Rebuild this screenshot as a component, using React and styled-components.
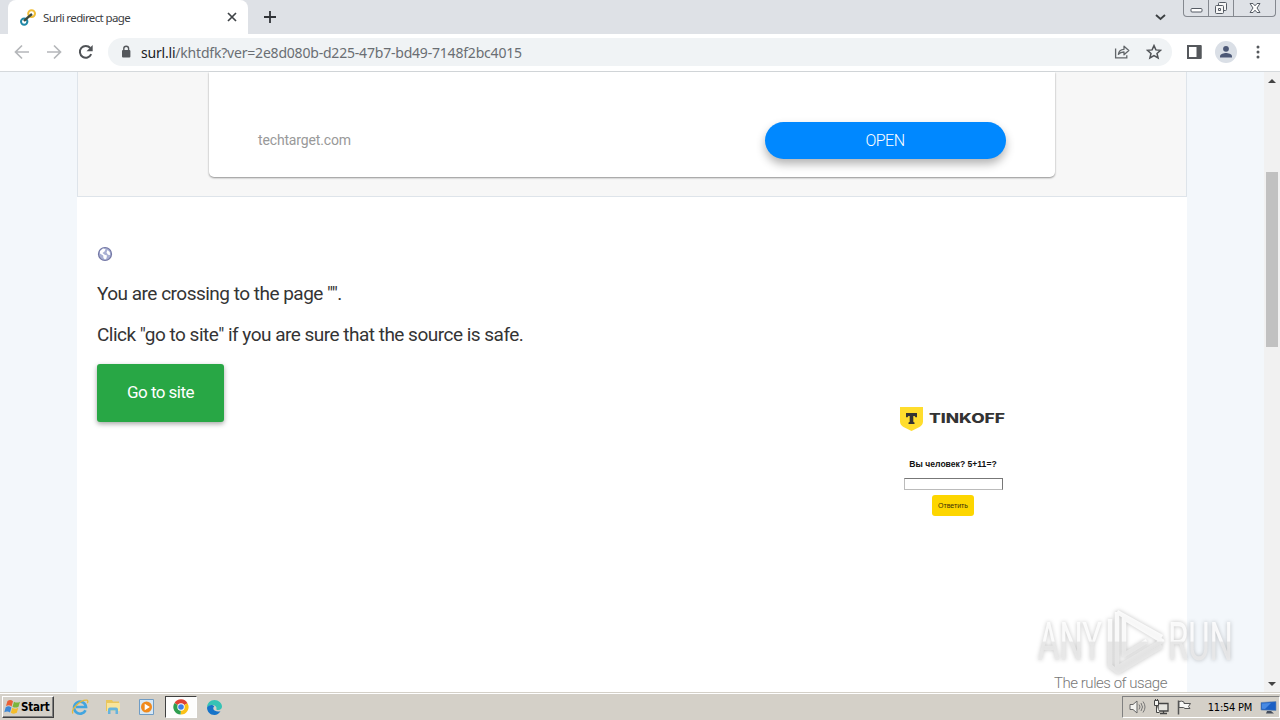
import React from "react";
import styled, { createGlobalStyle } from "styled-components";

const GlobalStyle = createGlobalStyle`
  * {
    box-sizing: border-box;
  }
  body {
    margin: 0;
    overflow: hidden;
    background: #fff;
    font-family: Roboto, "Liberation Sans", sans-serif;
  }
  svg {
    display: block;
    flex: none;
  }
`;

const Desktop = styled.div`
  position: relative;
  display: flex;
  flex-direction: column;
  width: 1280px;
  height: 720px;
  overflow: hidden;
`;

/* browser frame */

const TabStrip = styled.div`
  display: flex;
  height: 34px;
  background: #dee1e6;
  padding-left: 8px;
`;

const Tab = styled.div`
  display: flex;
  align-items: center;
  width: 240px;
  height: 34px;
  padding: 0 10px 0 12px;
  background: #fff;
  border-radius: 8px 8px 0 0;
`;

const TabTitle = styled.span`
  flex: 1;
  margin-left: 7px;
  font: 11.5px "Noto Sans", sans-serif;
  letter-spacing: -0.62px;
  color: #3c4043;
  white-space: nowrap;
`;

const NewTab = styled.div`
  padding: 11px 0 0 16px;
`;

const StripRight = styled.div`
  display: flex;
  margin-left: auto;
  gap: 17px;
`;

const ChevronBox = styled.div`
  padding-top: 14px;
`;

const WindowButtons = styled.div`
  display: flex;
  width: 93px;
  height: 17px;
  margin-right: 4px;
  border: 1px solid #84888f;
  border-top: none;
  border-radius: 0 0 4px 4px;
`;

const WindowButton = styled.div`
  display: flex;
  justify-content: center;
  width: ${(props) => props.$width}px;
  border-right: ${(props) => (props.$last ? "none" : "1px solid #84888f")};
`;

const Toolbar = styled.div`
  display: flex;
  align-items: center;
  height: 38px;
  padding: 0 20px 1px 14px;
  border-bottom: 1px solid #d5d9dc;
  background: #fff;
`;

const NavButtons = styled.div`
  display: flex;
  gap: 16px;
  width: 94px;
`;

const AddressBar = styled.div`
  display: flex;
  align-items: center;
  width: 1064px;
  height: 28px;
  padding: 0 10px 0 12px;
  border-radius: 14px;
  background: #f0f3f5;
`;

const Url = styled.span`
  flex: 1;
  margin-left: 9px;
  font: 14px "Noto Sans", sans-serif;
  letter-spacing: -0.2px;
  color: #6a6e73;
  white-space: nowrap;
  b {
    font-weight: 400;
    color: #202124;
  }
`;

const AddressActions = styled.div`
  display: flex;
  gap: 16px;
`;

const ToolbarActions = styled.div`
  display: flex;
  align-items: center;
  flex: 1;
  padding-left: 15px;
`;

const Avatar = styled.div`
  display: flex;
  align-items: center;
  justify-content: center;
  width: 22px;
  height: 22px;
  margin: 0 auto 0 13px;
  border-radius: 50%;
  background: #dadfe6;
`;

/* page */

const Viewport = styled.div`
  display: flex;
  height: 620px;
  background: #f3f7fb;
`;

const Page = styled.main`
  display: flex;
  flex-direction: column;
  width: 1110px;
  height: 620px;
  margin: 0 77px;
  background: #fff;
`;

const AdArea = styled.section`
  height: 125px;
  padding: 0 131px;
  background: #f7f7f7;
  border: 1px solid #dee4ea;
  border-top: none;
`;

const AdCard = styled.div`
  display: flex;
  align-items: flex-end;
  justify-content: space-between;
  height: 105px;
  padding: 0 49px 18px;
  background: #fff;
  border-radius: 0 0 5px 5px;
  box-shadow: 0 1px 2px rgba(0, 0, 0, 0.42);
`;

const AdDomain = styled.span`
  height: 28px;
  font-size: 14px;
  letter-spacing: -0.15px;
  line-height: 18px;
  color: #999;
`;

const OpenButton = styled.button`
  width: 241px;
  height: 37px;
  padding: 0 1px 0 0;
  border: none;
  border-radius: 19px;
  background: #0088ff;
  color: #fff;
  font: 300 16px Roboto, sans-serif;
  letter-spacing: -0.5px;
  box-shadow: 0 5px 10px rgba(0, 0, 0, 0.3);
`;

const Content = styled.section`
  display: flex;
  flex: 1;
  padding: 49px 20px 0;
`;

const Message = styled.div`
  width: 803px;
  color: #343434;
`;

const Line = styled.p`
  margin: ${(props) => props.$top}px 0 0;
  font-size: 19px;
  letter-spacing: -0.51px;
  line-height: 24px;
`;

const GoButton = styled.button`
  width: 127px;
  height: 58px;
  margin-top: 17px;
  padding: 0 0 2px;
  border: none;
  border-radius: 3px;
  background: #28a745;
  color: #fff;
  font: 17px Roboto, sans-serif;
  letter-spacing: -0.55px;
  box-shadow: 0 2px 5px rgba(0, 0, 0, 0.35);
`;

const Side = styled.div`
  display: flex;
  flex-direction: column;
  align-items: flex-end;
  justify-content: space-between;
  flex: 1;
`;

const Captcha = styled.form`
  display: flex;
  flex-direction: column;
  align-items: center;
  width: 108px;
  margin: 160px 160px 0 0;
  font-family: "Liberation Sans", sans-serif;
`;

const Question = styled.div`
  margin-top: 27px;
  font-size: 8.6px;
  font-weight: 700;
  line-height: 11px;
  color: #111;
  white-space: nowrap;
`;

const Answer = styled.input`
  width: 99px;
  height: 12px;
  margin-top: 8px;
  padding: 0;
  border: 1px solid #bbb;
  border-top-color: #777;
  border-right-color: #777;
  background: #fff;
`;

const Submit = styled.button`
  width: 42px;
  height: 21px;
  margin-top: 5px;
  padding: 0;
  border: none;
  border-radius: 3px;
  background: #fdd600;
  color: #3a3008;
  font: 7px "Liberation Sans", sans-serif;
`;

const Rules = styled.span`
  font-size: 15px;
  font-weight: 300;
  letter-spacing: -0.46px;
  line-height: 18px;
  color: #777;
`;

const Scrollbar = styled.div`
  display: flex;
  flex-direction: column;
  align-items: center;
  width: 16px;
  padding: 7px 0 6px;
  background: #f1f1f1;
`;

const Thumb = styled.div`
  width: 12px;
  height: 175px;
  margin: 89px 0 auto;
  background: #c1c1c1;
`;

const Arrow = styled.div`
  border: 4px solid transparent;
  border-top-width: ${(props) => (props.$up ? 0 : 4)}px;
  border-bottom-width: ${(props) => (props.$up ? 4 : 0)}px;
  border-top-color: ${(props) => (props.$up ? "transparent" : "#444")};
  border-bottom-color: ${(props) => (props.$up ? "#444" : "transparent")};
`;

const Watermark = styled.svg`
  position: absolute;
  left: 1030px;
  top: 600px;
  overflow: visible;
  filter: drop-shadow(0 0 2px rgba(0, 0, 0, 0.28));
`;

/* taskbar */

const Taskbar = styled.footer`
  display: flex;
  height: 28px;
  padding: 4px 0 0 2px;
  background: #d4d0c8;
  box-shadow: inset 0 1px #d4d0c8, inset 0 2px #fff;
`;

const StartButton = styled.div`
  display: flex;
  align-items: center;
  width: 52px;
  height: 22px;
  padding-left: 1px;
  border: 1px solid;
  border-color: #fff #404040 #404040 #fff;
  box-shadow: inset -1px -1px #808080;
  font: 700 11.5px "DejaVu Sans Condensed", "DejaVu Sans", sans-serif;
  letter-spacing: -0.2px;
  color: #000;
`;

const QuickLaunch = styled.div`
  display: flex;
  margin-left: 9px;
`;

const TaskItem = styled.div`
  display: flex;
  align-items: center;
  justify-content: center;
  width: ${(props) => (props.$active ? 32 : 33.5)}px;
  height: 22px;
  margin: 0 ${(props) => (props.$active ? 1 : 0)}px;
  border: 1px solid transparent;
  ${(props) =>
    props.$active &&
    "background: #fdfdfc; border-color: #404040 #fff #fff #404040;"}
`;

const Tray = styled.div`
  display: flex;
  align-items: center;
  width: 158px;
  height: 22px;
  margin: 0 0 0 auto;
  padding: 0 2px 0 6px;
  border: 1px solid;
  border-color: #808080 #fff #fff #808080;
`;

const TrayIcons = styled.div`
  display: flex;
  gap: 7px;
`;

const Clock = styled.span`
  margin: 0 8px 0 auto;
  font: 11px "DejaVu Sans Condensed", "DejaVu Sans", sans-serif;
  letter-spacing: -0.25px;
  color: #000;
  white-space: nowrap;
`;

const LinkLogo = () => (
  <svg width="16" height="17" viewBox="0 0 16 17" fill="none" strokeWidth="2">
    <circle cx="11.6" cy="4.6" r="3.4" stroke="#f0bd35" />
    <circle cx="4.2" cy="12.6" r="3.2" stroke="#1e87a6" />
    <path d="M4 12l3.6-3.4L12 5" stroke="#3e4a3c" strokeWidth="2.4" />
  </svg>
);

const NavArrow = ({ flip }) => (
  <svg width="16" height="16" viewBox="0 0 16 16" fill="none" stroke="#b5b7ba" strokeWidth="1.7">
    <path d={flip ? "M1 8h13M8 1.5L14.5 8 8 14.5" : "M15 8H2M8 1.5L1.5 8 8 14.5"} />
  </svg>
);

const Reload = () => (
  <svg width="16" height="16" viewBox="0 0 16 16">
    <path
      d="M13.2 10.2A5.9 5.9 0 1 1 12.3 4"
      fill="none"
      stroke="#505357"
      strokeWidth="2"
    />
    <path d="M14.7 1v6.2H8.5z" fill="#505357" />
  </svg>
);

const Lock = () => (
  <svg width="12" height="14" viewBox="0 0 12 14">
    <rect x="2" y="5" width="8.4" height="7.5" rx="1" fill="#55585c" />
    <path d="M3.8 5.5V3.6a2.4 2.4 0 0 1 4.8 0v1.9" fill="none" stroke="#55585c" strokeWidth="1.4" />
  </svg>
);

const Share = () => (
  <svg width="16" height="16" viewBox="0 0 16 16" fill="none" stroke="#62666a" strokeWidth="1.3">
    <path d="M1.6 4.5v9.4h11.2v-2.6" />
    <path d="M4.4 10.4c.4-3.6 2.3-5 5.6-5.1V2.2L14.8 6.6 10 10.8V8c-2.5 0-4.2.6-5.600 2.400z" strokeLinejoin="round" />
  </svg>
);

const Star = () => (
  <svg width="16" height="16" viewBox="0 0 16 16">
    <path
      d="M8 1.6l1.900 4.300 4.700.4-3.600 3.100 1.100 4.600L8 11.600 3.900 14 5 9.400 1.400 6.300l4.700-.4z"
      fill="none"
      stroke="#505357"
      strokeWidth="1.5"
    />
  </svg>
);

const SidePanel = () => (
  <svg width="15" height="14" viewBox="0 0 15 14">
    <path d="M1 1h12.5v12H1z" fill="none" stroke="#55585c" strokeWidth="2" />
    <path d="M9.5 1h5v12h-5z" fill="#55585c" />
  </svg>
);

const Person = () => (
  <svg width="14" height="14" viewBox="0 0 14 14" fill="#4c5876">
    <circle cx="7" cy="3.8" r="2.9" />
    <path d="M1 12.5v-1.3c0-2 4-3.200 6-3.200s6 1.200 6 3.200v1.300z" />
  </svg>
);

const Dots = () => (
  <svg width="4" height="14" viewBox="0 0 4 14" fill="#55585c">
    <circle cx="2" cy="2" r="1.5" />
    <circle cx="2" cy="7" r="1.5" />
    <circle cx="2" cy="12" r="1.5" />
  </svg>
);

const Globe = () => (
  <svg width="16" height="16" viewBox="0 0 16 16">
    <circle cx="8" cy="8" r="6.5" fill="#a9b0d3" stroke="#7377a5" strokeWidth="1.2" />
    <path
      d="M3 5l3-2.400 2.600.6-1.100 2.300-2 1.400 2.200 1.800 2.300.8-.6 3-1.400 1-1.500-1.500-.3-2.400L3 7.600zM10.500 4l2.300 2.300.3 2.700-2.100-.3-1.500-2.300z"
      fill="#fff"
    />
  </svg>
);

const TinkoffLogo = () => (
  <svg width="108" height="26" viewBox="0 0 108 26">
    <path d="M1 1h23v14.500c0 2.500-1.500 4.500-3.500 5.600l-8 4-8-4C2.500 20 1 18 1 15.500z" fill="#ffdd2d" />
    <path d="M7 7h11v4.200h-1.600c-.2-.9-.7-1.300-1.900-1.300h-.2v5.200c0 1 .3 1.400 1.200 1.500V18h-6v-1.400c.9-.1 1.200-.5 1.200-1.500V9.900h-.2c-1.200 0-1.700.4-1.900 1.300H7z" fill="#333" />
    <text
      x="30"
      y="17"
      fontFamily="Inter, sans-serif"
      fontSize="13"
      fontWeight="800"
      textLength="76"
      lengthAdjust="spacingAndGlyphs"
      fill="#333"
    >
      TINKOFF
    </text>
  </svg>
);

const AnyRun = () => (
  <Watermark width="220" height="84" viewBox="0 0 220 84">
    <defs>
      <linearGradient id="mark" x1="0" y1="0" x2="0" y2="84" gradientUnits="userSpaceOnUse">
        <stop offset="0.49" stopColor="#fff" />
        <stop offset="0.5" stopColor="#e9e9e9" />
      </linearGradient>
    </defs>
    <g fill="url(#mark)" opacity="0.85" fontFamily="Roboto, sans-serif" fontSize="54">
      <text x="8" y="60" textLength="64" lengthAdjust="spacingAndGlyphs">
        ANY
      </text>
      <text x="138" y="60" textLength="65" lengthAdjust="spacingAndGlyphs">
        RUN
      </text>
    </g>
    <g fill="none" stroke="url(#mark)" strokeWidth="4.5" strokeLinejoin="round" opacity="0.85">
      <path d="M87 12v56l45-27L94 18v37l23-14" />
      <path d="M87 12l45 25M80 19v47l8 6 44-26" />
    </g>
  </Watermark>
);

const Flag = () => (
  <svg width="17" height="16" viewBox="0 0 17 16">
    <path d="M3.5 2q3-2 5.500.3L7.600 7.400Q5 5.300 2 7.100z" fill="#ea6035" />
    <path d="M10 2.700q3 1.700 6 0l-1.500 5q-3 1.700-6 0z" fill="#7bb53b" />
    <path d="M1.700 8.200q3-1.800 5.700.3L6 13.500q-2.500-2-5.700-.2z" fill="#3d88d6" />
    <path d="M8.300 8.800q3 1.700 6 0l-1.500 5q-3 1.700-6-.1z" fill="#f4bd2b" />
  </svg>
);

const Explorer = () => (
  <svg width="18" height="18" viewBox="0 0 18 18" fill="none">
    <path d="M14.500 12.200A6 6 0 1 1 15 9H5" stroke="#42a5df" strokeWidth="2.6" />
    <path d="M2 15.500C-.5 12 9 1.500 16 2.200c1.200.4 1 2 .3 3" stroke="#e5b93c" strokeWidth="1.3" />
  </svg>
);

const Folder = () => (
  <svg width="18" height="18" viewBox="0 0 18 18">
    <path d="M2 2h6l1 1.500h6V13H2z" fill="#e9c65c" />
    <path d="M3 5h13v8H3z" fill="#f8e49b" />
    <path d="M4 16v-4.500q0-2 2-2h6q2 0 2 2V16h-2.500v-3.500h-5V16z" fill="#66b4dd" />
  </svg>
);

const MediaPlayer = () => (
  <svg width="18" height="18" viewBox="0 0 18 18">
    <path d="M1.500 1.500h14v15h-14z" fill="#d7e8f6" stroke="#6f9cc5" />
    <circle cx="8.500" cy="9" r="5.500" fill="#f08a1d" />
    <path d="M6.700 5.800v6.400l5.200-3.200z" fill="#fff" />
  </svg>
);

const Chrome = () => (
  <svg width="16" height="16" viewBox="0 0 16 16">
    <path d="M8 8L1.500 4A7.500 7.500 0 0 1 14.500 4.200z" fill="#e04334" />
    <path d="M8 8l6.500-3.800A7.500 7.500 0 0 1 7.600 15.500z" fill="#fbc116" />
    <path d="M8 8l-.4 7.500A7.500 7.500 0 0 1 1.500 4z" fill="#2f9e4f" />
    <circle cx="8" cy="8" r="3.7" fill="#fff" />
    <circle cx="8" cy="8" r="2.8" fill="#3f7fe8" />
  </svg>
);

const Edge = () => (
  <svg width="17" height="17" viewBox="0 0 17 17">
    <path d="M1 8.500C1 4 4.500 1 8.500 1S16 4 16 7.500c0 2-1.500 3.500-3.700 3.500-1.700 0-2.600-.6-1.800-1.500C11 6 4 4 1 8.500z" fill="#36c3b5" />
    <path d="M1 8.500C3 5 7.500 5.500 8.300 7.500 6 9 7.500 13.500 14.500 12.200 13 14.600 11 16 8.500 16 4 16 1 12.500 1 8.500z" fill="#1673c9" />
  </svg>
);

const Speaker = () => (
  <svg width="17" height="16" viewBox="0 0 17 16">
    <path d="M1 5.500h3L8 2v12l-4-3.500H1z" fill="#f3f3f0" stroke="#666" />
    <path d="M10 5.500q2 2.500 0 5M12 4q3 4 0 8M14 2.500q4 5.500 0 11" fill="none" stroke="#777" />
  </svg>
);

const Network = () => (
  <svg width="16" height="16" viewBox="0 0 16 16" fill="#e6e5e0" stroke="#444">
    <path d="M5 4.500h10v7.500H5zM7 14.500h7M10.500 12v2" strokeWidth="1.3" />
    <path d="M1.500 1.500h4v5h-4zM3.500 6.500v7h3" fill="#f4f4f1" />
    <path d="M2.500 0v2M4.500 0v2" />
  </svg>
);

const ActionFlag = () => (
  <svg width="16" height="16" viewBox="0 0 16 16" fill="#f8f8f6" stroke="#555">
    <path d="M2.500 1.500v14" strokeWidth="1.5" />
    <path d="M3 2.500q3-1 5 .6v1.400h6.500l-2 3 1.500 2H9L7.500 8.500H3z" />
  </svg>
);

const Monitor = () => (
  <svg width="17" height="15" viewBox="0 0 17 15">
    <path d="M1 2.500l15-1v9l-15-.5z" fill="#1a5fc4" stroke="#6a86ab" strokeWidth=".6" />
    <path d="M2 3.500l9-.6-6 6-3-.2z" fill="#488ae3" />
    <path d="M7 11h4l3 2.500H6z" fill="#444d5c" />
  </svg>
);

export default function App() {
  return (
    <Desktop>
      <GlobalStyle />

      <TabStrip>
        <Tab>
          <LinkLogo />
          <TabTitle>Surli redirect page</TabTitle>
          <svg width="12" height="12" viewBox="0 0 12 12" stroke="#3f4347" strokeWidth="1.7">
            <path d="M2 2l8 8M10 2l-8 8" />
          </svg>
        </Tab>
        <NewTab>
          <svg width="12" height="12" viewBox="0 0 12 12" stroke="#303338" strokeWidth="1.8">
            <path d="M6 0v12M0 6h12" />
          </svg>
        </NewTab>
        <StripRight>
          <ChevronBox>
            <svg width="11" height="7" viewBox="0 0 11 7" fill="none" stroke="#3c4043" strokeWidth="1.9">
              <path d="M1 1l4.500 4L10 1" />
            </svg>
          </ChevronBox>
          <WindowButtons>
            <WindowButton $width={25}>
              <svg width="13" height="16" viewBox="0 0 13 16">
                <rect x="1" y="8.5" width="11" height="3.5" rx="1" fill="#fff" stroke="#555b64" />
              </svg>
            </WindowButton>
            <WindowButton $width={25}>
              <svg width="14" height="16" viewBox="0 0 14 16" fill="#f6f6f6" stroke="#555b64">
                <rect x="4.5" y="2.5" width="8" height="8" rx="1" />
                <rect x="1.5" y="5.5" width="8" height="8" rx="1" />
                <path d="M4.500 8.500h2v2h-2z" />
              </svg>
            </WindowButton>
            <WindowButton $width={41} $last>
              <svg width="12" height="16" viewBox="0 0 12 16">
                <path
                  d="M1 3.500h3l2 2.300 2-2.300h3L8 8l3 4.500H8l-2-2.300-2 2.300H1L4 8z"
                  fill="#fff"
                  stroke="#555b64"
                />
              </svg>
            </WindowButton>
          </WindowButtons>
        </StripRight>
      </TabStrip>

      <Toolbar>
        <NavButtons>
          <NavArrow />
          <NavArrow flip />
          <Reload />
        </NavButtons>
        <AddressBar>
          <Lock />
          <Url>
            <b>surl.li</b>/khtdfk?ver=2e8d080b-d225-47b7-bd49-7148f2bc4015
          </Url>
          <AddressActions>
            <Share />
            <Star />
          </AddressActions>
        </AddressBar>
        <ToolbarActions>
          <SidePanel />
          <Avatar>
            <Person />
          </Avatar>
          <Dots />
        </ToolbarActions>
      </Toolbar>

      <Viewport>
        <Page>
          <AdArea>
            <AdCard>
              <AdDomain>techtarget.com</AdDomain>
              <OpenButton>OPEN</OpenButton>
            </AdCard>
          </AdArea>
          <Content>
            <Message>
              <Globe />
              <Line $top={20}>You are crossing to the page "".</Line>
              <Line $top={17}>
                Click "go to site" if you are sure that the source is safe.
              </Line>
              <GoButton>Go to site</GoButton>
            </Message>
            <Side>
              <Captcha>
                <TinkoffLogo />
                <Question>Вы человек? 5+11=?</Question>
                <Answer />
                <Submit type="button">Ответить</Submit>
              </Captcha>
              <Rules>The rules of usage</Rules>
            </Side>
          </Content>
        </Page>
        <Scrollbar>
          <Arrow $up />
          <Thumb />
          <Arrow />
        </Scrollbar>
      </Viewport>

      <Taskbar>
        <StartButton>
          <Flag />
          Start
        </StartButton>
        <QuickLaunch>
          <TaskItem>
            <Explorer />
          </TaskItem>
          <TaskItem>
            <Folder />
          </TaskItem>
          <TaskItem>
            <MediaPlayer />
          </TaskItem>
          <TaskItem $active>
            <Chrome />
          </TaskItem>
          <TaskItem>
            <Edge />
          </TaskItem>
        </QuickLaunch>
        <Tray>
          <TrayIcons>
            <Speaker />
            <Network />
            <ActionFlag />
          </TrayIcons>
          <Clock>11:54 PM</Clock>
          <Monitor />
        </Tray>
      </Taskbar>

      <AnyRun />
    </Desktop>
  );
}
